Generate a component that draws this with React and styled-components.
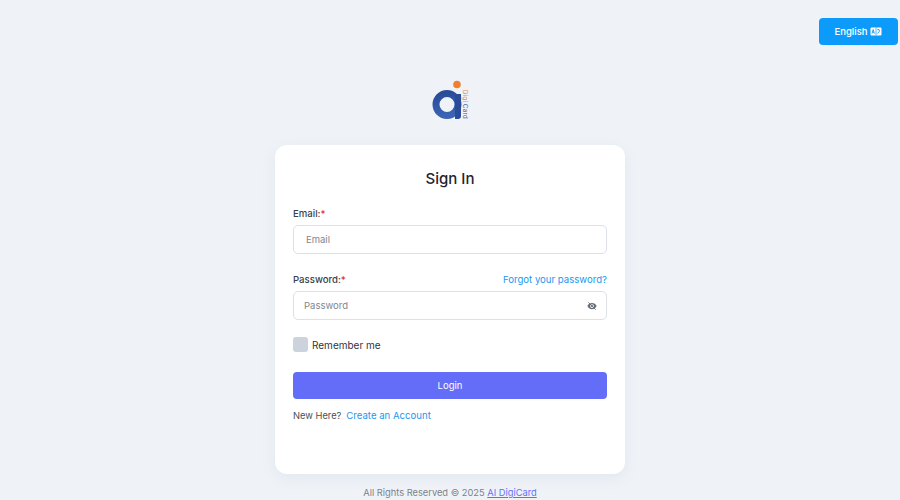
import styled, { createGlobalStyle } from "styled-components";

const GlobalStyle = createGlobalStyle`
  html, body {
    margin: 0;
    padding: 0;
    height: 100%;
    background: #eff3f8;
    font-family: "Inter", "Open Sans", sans-serif;
  }
  * {
    box-sizing: border-box;
  }
`;

const Page = styled.div`
  width: 900px;
  height: 500px;
  overflow: hidden;
  display: flex;
  flex-direction: column;
  align-items: center;
  padding-top: 18px;
`;
const TopBar = styled.div`
  width: 100%;
  height: 27px;
  display: flex;
  justify-content: flex-end;
  padding-right: 2px;
`;
const LangButton = styled.button`
  width: 79px;
  height: 27px;
  display: flex;
  align-items: center;
  justify-content: center;
  gap: 3px;
  border: none;
  border-radius: 4px;
  background: #0d9bfb;
  color: #fff;
  font-family: inherit;
  font-size: 9.5px;
  font-weight: 500;
  padding: 0;
`;
const LogoWrap = styled.div`
  height: 40px;
  margin-top: 35px;
  display: flex;
`;
const Card = styled.form`
  width: 350px;
  height: 329px;
  margin-top: 25px;
  padding: 24px 18px 0;
  background: #fff;
  border-radius: 12px;
  box-shadow: 0 4px 14px rgba(120, 135, 165, 0.1);
  display: flex;
  flex-direction: column;
`;
const Title = styled.h1`
  margin: 0;
  height: 20px;
  line-height: 20px;
  text-align: center;
  font-size: 15px;
  font-weight: 500;
  color: #1f2430;
`;
const Field = styled.div`
  margin-top: ${({ $top }) => $top}px;
  display: flex;
  flex-direction: column;
`;
const LabelRow = styled.div`
  height: 14px;
  display: flex;
  justify-content: space-between;
  align-items: center;
  margin-bottom: 5px;
`;
const Label = styled.label`
  font-size: 9.6px;
  font-weight: 500;
  color: #3a3f4a;
`;
const Required = styled.span`
  color: #e5213e;
`;
const TextLink = styled.a`
  font-size: 9.6px;
  color: ${({ $purple }) => ($purple ? "#6271f5" : "#1a98ee")};
  text-decoration: ${({ $purple }) => ($purple ? "underline" : "none")};
`;
const FooterLink = styled(TextLink)`
  font-size: 9.3px;
`;
const InputBox = styled.div`
  height: 29px;
  display: flex;
  align-items: center;
  justify-content: space-between;
  padding: 0 9px 0 10px;
  border: 1px solid #dde1e7;
  border-radius: 5px;
  background: #fff;
`;
const Input = styled.input`
  flex: 1;
  min-width: 0;
  border: none;
  outline: none;
  padding: 0 0 0 ${({ $indent }) => $indent || 0}px;
  background: transparent;
  font-family: inherit;
  font-size: 9.5px;
  color: #333;
  &::placeholder {
    color: #7f8691;
    opacity: 1;
  }
`;
const RememberRow = styled.div`
  margin-top: 17px;
  height: 15px;
  display: flex;
  align-items: center;
  gap: 4px;
`;
const Checkbox = styled.span`
  width: 15px;
  height: 15px;
  border-radius: 3px;
  background: #cdd3dc;
`;
const RememberText = styled.span`
  font-size: 10px;
  color: #30343c;
`;
const LoginButton = styled.button`
  margin-top: 20px;
  height: 27px;
  border: none;
  border-radius: 4px;
  background: #636df8;
  color: #fff;
  font-family: inherit;
  font-size: 9.5px;
  padding: 0;
`;
const SignupRow = styled.div`
  margin-top: 11px;
  display: flex;
  gap: 5px;
  font-size: 9.3px;
  color: #4a4f59;
`;
const Footer = styled.footer`
  margin-top: 13px;
  font-size: 9.3px;
  line-height: 12px;
  color: #7b828c;
`;

function Logo() {
  return (
    <svg width="40" height="40" viewBox="0 0 40 40">
      <defs>
        <linearGradient id="ring" x1="0.2" y1="0" x2="0.4" y2="1">
          <stop offset="0" stopColor="#2a4c98" />
          <stop offset="1" stopColor="#3a63b4" />
        </linearGradient>
      </defs>
      <circle cx="27" cy="4.5" r="3.8" fill="#f08030" />
      <circle cx="17" cy="24.5" r="11" fill="none" stroke="url(#ring)" strokeWidth="7" />
      <path d="M25 14h6v22q0 3-3 3h-3z" fill="#2a4c98" />
      <text transform="translate(33,10) rotate(90)" fontSize="6" letterSpacing="0.4" fill="#e8833c" fontFamily="Inter, sans-serif">
        Digi
      </text>
      <text transform="translate(33,24) rotate(90)" fontSize="6" letterSpacing="0.4" fill="#3b5aa8" fontFamily="Inter, sans-serif">
        Card
      </text>
    </svg>
  );
}

function FlagIcon() {
  return (
    <svg width="12" height="9" viewBox="0 0 12 9">
      <rect x="0.5" y="0.5" width="11" height="8" rx="1" fill="#fff" />
      <path d="M2 6.5 3.2 2.5 4.4 6.5M2.5 5.2H3.9" fill="none" stroke="#0d9bfb" strokeWidth="0.9" />
      <path d="M6 0.5V8.5" stroke="#0d9bfb" strokeWidth="0.7" />
      <path d="M7.5 2.5h1.6q1.2 2-1.6 4" fill="none" stroke="#0d9bfb" strokeWidth="0.9" />
    </svg>
  );
}

function EyeIcon() {
  return (
    <svg width="10" height="10" viewBox="0 0 24 24" fill="#666c74">
      <path d="M12 4.5C7 4.5 2.7 7.6 1 12c1.7 4.4 6 7.5 11 7.5s9.3-3.1 11-7.5c-1.7-4.4-6-7.5-11-7.5zm0 12a4.5 4.5 0 1 1 0-9 4.5 4.5 0 0 1 0 9z" />
      <circle cx="12" cy="12" r="2.5" />
      <path d="M3 3 21 21" stroke="#666c74" strokeWidth="2" />
    </svg>
  );
}

export default function App() {
  return (
    <Page>
      <GlobalStyle />
      <TopBar>
        <LangButton type="button">
          English <FlagIcon />
        </LangButton>
      </TopBar>
      <LogoWrap>
        <Logo />
      </LogoWrap>
      <Card>
        <Title>Sign In</Title>
        <Field $top={17}>
          <LabelRow>
            <Label>
              Email:<Required>*</Required>
            </Label>
          </LabelRow>
          <InputBox>
            <Input placeholder="Email" $indent={2} />
          </InputBox>
        </Field>
        <Field $top={18}>
          <LabelRow>
            <Label>
              Password:<Required>*</Required>
            </Label>
            <TextLink href="#">Forgot your password?</TextLink>
          </LabelRow>
          <InputBox>
            <Input placeholder="Password" />
            <EyeIcon />
          </InputBox>
        </Field>
        <RememberRow>
          <Checkbox />
          <RememberText>Remember me</RememberText>
        </RememberRow>
        <LoginButton type="button">Login</LoginButton>
        <SignupRow>
          New Here?
          <TextLink href="#">Create an Account</TextLink>
        </SignupRow>
      </Card>
      <Footer>
        All Rights Reserved © 2025 <FooterLink $purple href="#">AI DigiCard</FooterLink>
      </Footer>
    </Page>
  );
}
